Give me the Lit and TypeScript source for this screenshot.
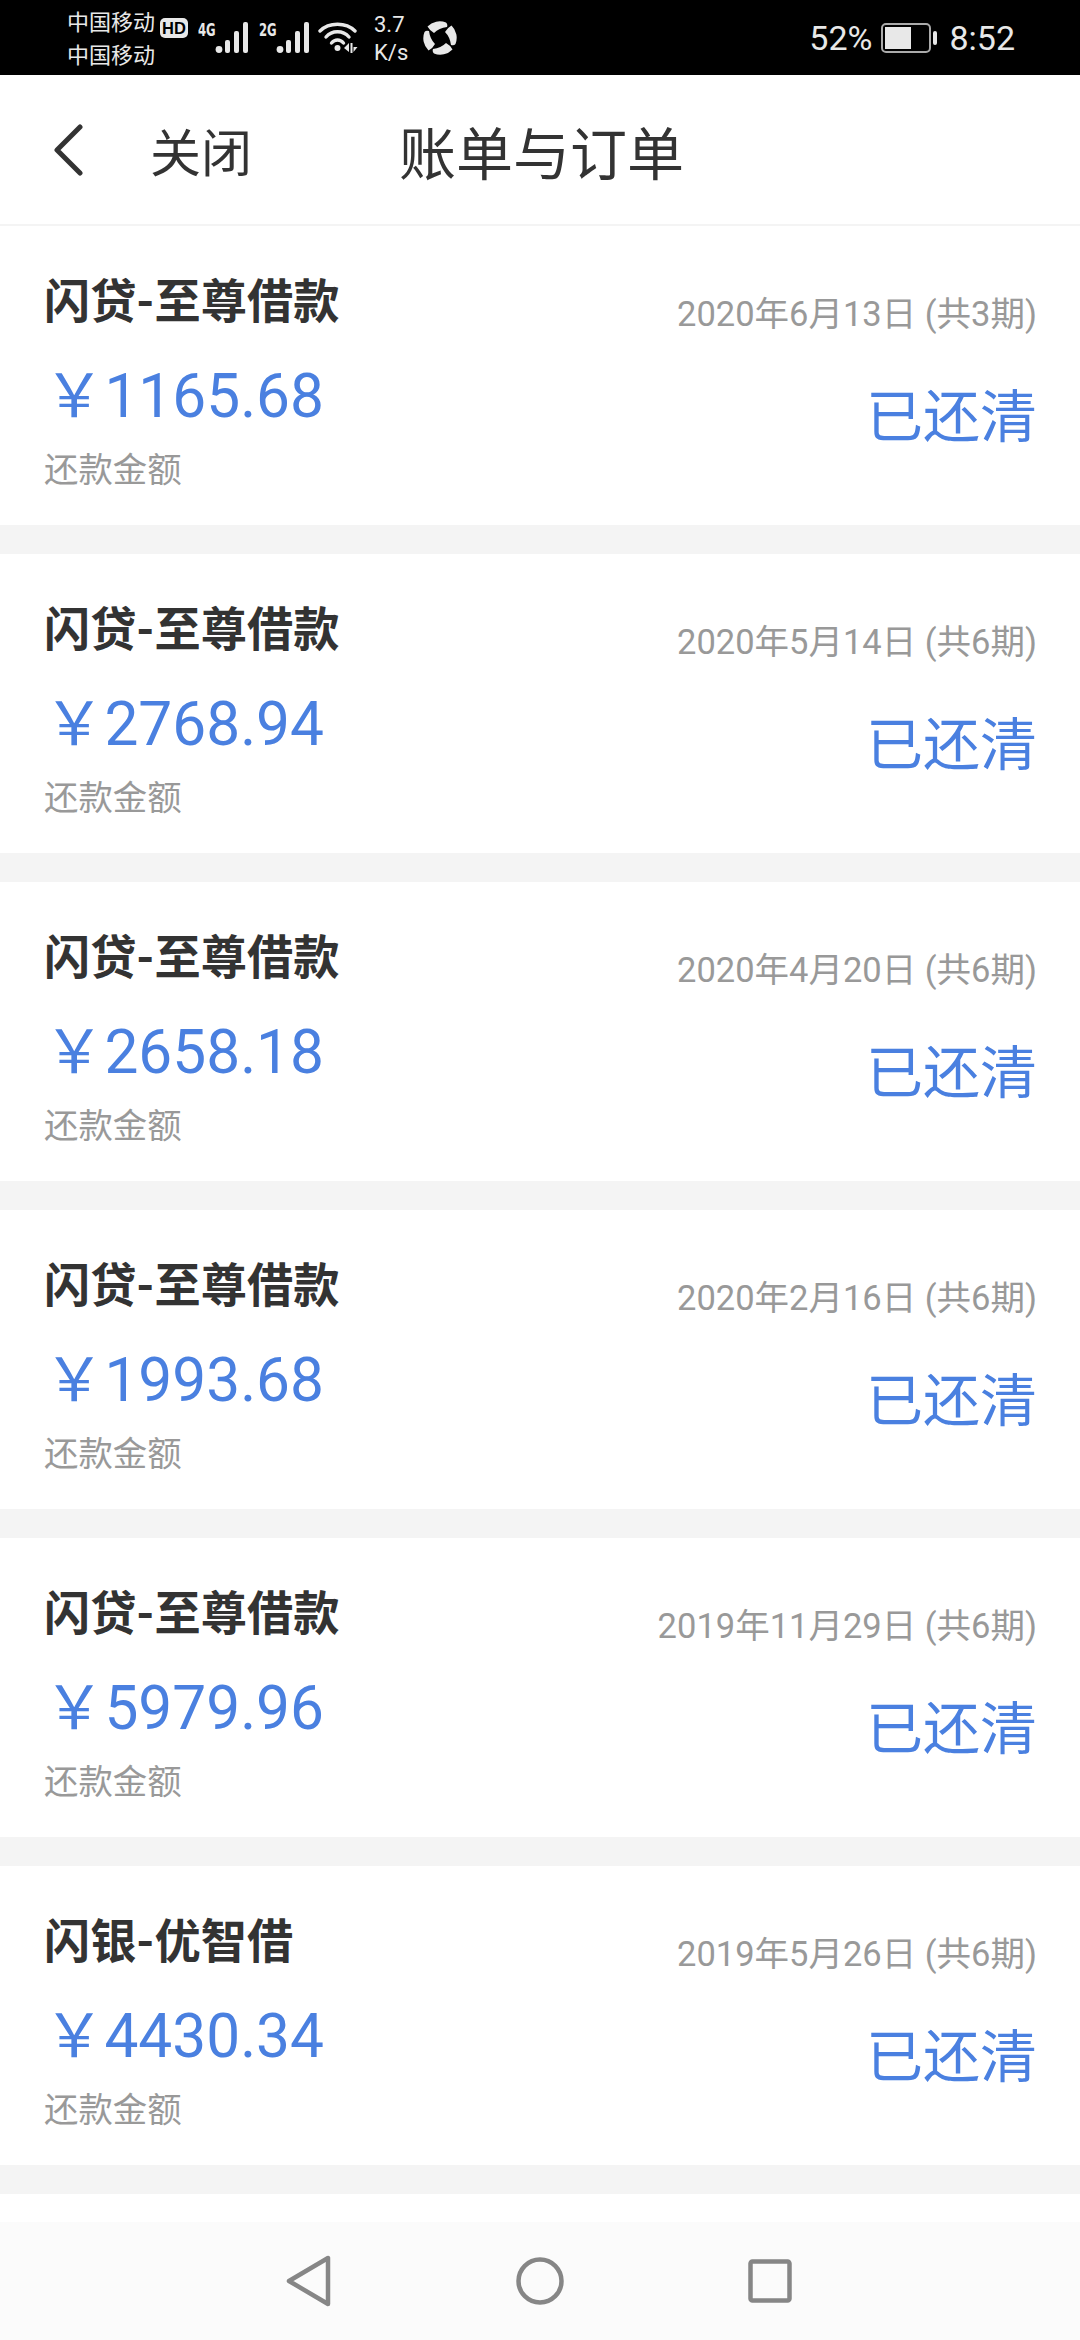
import { LitElement, html, css, svg } from 'lit';
import { customElement } from 'lit/decorators.js';

type Bill = { name: string, amount: string, date: string };

const BILLS: Bill[] = [
    { name: "闪贷-至尊借款", amount: "1165.68", date: "2020年6月13日 (共3期)" },
    { name: "闪贷-至尊借款", amount: "2768.94", date: "2020年5月14日 (共6期)" },
    { name: "闪贷-至尊借款", amount: "2658.18", date: "2020年4月20日 (共6期)" },
    { name: "闪贷-至尊借款", amount: "1993.68", date: "2020年2月16日 (共6期)" },
    { name: "闪贷-至尊借款", amount: "5979.96", date: "2019年11月29日 (共6期)" },
    { name: "闪银-优智借", amount: "4430.34", date: "2019年5月26日 (共6期)" },
];

const signal = html`
    <svg width="34" height="32" viewBox="0 0 34 32" fill="#e8e8e8">
        <circle cx="4" cy="27.5" r="3.4"></circle>
        <rect x="10" y="18" width="5" height="13" rx="2"></rect>
        <rect x="19" y="9" width="5" height="22" rx="2"></rect>
        <rect x="28" y="0" width="5" height="31" rx="2"></rect>
    </svg>`;

// one of the four petals of the round app logo
const PETAL = "M4.5 5.5 A17 17 0 0 1 23 1.5 Q25 3 24 6 Q16 7 11 12 Q7 10 4.5 5.5 Z";

@customElement('app-root')
export default class AppRoot extends LitElement {

    static styles = css`
    :host{
        display: flex;
        flex-direction: column;
        width: 1080px;
        height: 2340px;
        overflow: hidden;
        background: #fff;
        font-family: Roboto, "Noto Sans CJK SC", sans-serif;
    }

    .status{
        flex: none;
        display: flex;
        align-items: center;
        height: 75px;
        padding: 0 65px 0 67px;
        box-sizing: border-box;
        background: #000;
        color: #e8e8e8;
    }
    .carrier{
        width: 88px;
        margin-top: 2px;
        font-size: 22px;
        line-height: 33px;
        white-space: nowrap;
    }
    .hd{
        margin: 0 0 20px 5px;
    }
    .net{
        display: flex;
        align-items: flex-end;
        margin: 0 0 0 10px;
    }
    .net span{
        width: 17px;
        margin-bottom: 16px;
        font-family: "DejaVu Sans Condensed", sans-serif;
        font-size: 18px;
        font-weight: bold;
        line-height: 16px;
        transform: scaleX(.72);
        transform-origin: left center;
    }
    .wifi{
        margin-left: 8px;
    }
    .speed{
        width: 49px;
        margin: 2px 0 0 16px;
        font-size: 22px;
        line-height: 28px;
    }
    .logo{
        margin-top: 1px;
    }
    .spacer{
        flex: 1;
    }
    .status__text{
        font-size: 34px;
    }
    .battery{
        margin: 0 11px 0 9px;
    }

    .header{
        flex: none;
        display: flex;
        align-items: center;
        height: 151px;
        padding-left: 50px;
        box-sizing: border-box;
        border-bottom: 2px solid #f4f4f4;
        color: #333;
    }
    .close{
        width: 249px;
        margin-left: 64px;
        font-size: 51px;
    }
    .title{
        font-size: 57px;
    }

    .list{
        flex: 1;
        display: flex;
        flex-direction: column;
        gap: 29px;
    }
    .card{
        flex: none;
        display: flex;
        justify-content: space-between;
        height: 299px;
        padding: 0 43px 0 44px;
        box-sizing: border-box;
        box-shadow: 0 29px 0 #f4f4f4;
    }
    .card__name{
        margin-top: 44px;
        font-size: 46.2px;
        line-height: 64px;
        font-weight: bold;
        color: #333;
    }
    .card__amount{
        margin-top: 28px;
        font-size: 60.4px;
        line-height: 70px;
        color: #4a80e0;
    }
    .card__label{
        margin-top: 14px;
        font-size: 34.4px;
        line-height: 48px;
        color: #999;
    }
    .card__side{
        display: flex;
        flex-direction: column;
        align-items: flex-end;
    }
    .card__date{
        margin-top: 64px;
        font-size: 34.5px;
        line-height: 48px;
        color: #999;
    }
    .card__state{
        margin-top: 40px;
        font-size: 57px;
        line-height: 80px;
        color: #4a80e0;
    }

    .nav{
        flex: none;
        display: flex;
        align-items: center;
        height: 118px;
        padding-left: 286px;
        background: #fbfbfb;
    }
    .nav svg{
        display: block;
    }
    .nav svg + svg{
        margin-left: 184px;
    }
    `;

    render() {
        return html`
            <div class="status">
                <div class="carrier">
                    <div>中国移动</div>
                    <div>中国移动</div>
                </div>
                <svg class="hd" width="28" height="20" viewBox="0 0 28 20">
                    <rect width="28" height="20" rx="5" fill="#e8e8e8"></rect>
                    <text x="14" y="16" text-anchor="middle" font-family="Liberation Sans" font-weight="bold" font-size="16.5" fill="#000">HD</text>
                </svg>
                <div class="net"><span>4G</span>${signal}</div>
                <div class="net"><span>2G</span>${signal}</div>
                <svg class="wifi" width="40" height="36" viewBox="0 0 40 36" fill="none" stroke="#e8e8e8" stroke-width="3.4" stroke-linecap="round">
                    <path d="M2 11 C11 2 28 2 37 11"></path>
                    <path d="M8 17 C14 10 25 10 31 17"></path>
                    <path d="M13.5 23 C17 19 22 19 25.5 23"></path>
                    <circle cx="19.5" cy="28" r="3" fill="#e8e8e8" stroke="none"></circle>
                    <path d="M31 23 L26 28 L31 32 Z M32.5 23 H34.5 V33 H32.5 Z M35.5 27 H39.5 L35.5 32 Z" fill="#e8e8e8" stroke="none"></path>
                </svg>
                <div class="speed">3.7<br />K/s</div>
                <svg class="logo" width="34" height="34" viewBox="0 0 34 34" fill="#e8e8e8">
                    ${[0, 90, 180, 270].map(angle => svg`<path d="${PETAL}" transform="rotate(${angle} 17 17)"></path>`)}
                </svg>
                <div class="spacer"></div>
                <div class="status__text">52%</div>
                <svg class="battery" width="57" height="30" viewBox="0 0 57 30">
                    <rect x="1" y="1" width="48" height="28" rx="4" fill="none" stroke="#aaa" stroke-width="2"></rect>
                    <rect x="4" y="4" width="26" height="22" fill="#e8e8e8"></rect>
                    <rect x="52" y="8" width="4" height="14" rx="2" fill="#e8e8e8"></rect>
                </svg>
                <div class="status__text">8:52</div>
            </div>

            <div class="header">
                <svg width="36" height="52" viewBox="0 0 36 52" fill="none" stroke="#333" stroke-width="5" stroke-linecap="round" stroke-linejoin="round">
                    <path d="M30 3 L7 26 L30 49"></path>
                </svg>
                <div class="close">关闭</div>
                <div class="title">账单与订单</div>
            </div>

            <div class="list">
                ${BILLS.map(bill => html`
                    <div class="card">
                        <div>
                            <div class="card__name">${bill.name}</div>
                            <div class="card__amount">￥${bill.amount}</div>
                            <div class="card__label">还款金额</div>
                        </div>
                        <div class="card__side">
                            <div class="card__date">${bill.date}</div>
                            <div class="card__state">已还清</div>
                        </div>
                    </div>
                `)}
            </div>

            <div class="nav">
                <svg width="46" height="52" viewBox="0 0 46 52" fill="none" stroke="#868686" stroke-width="4.5" stroke-linejoin="round">
                    <path d="M3 26 L42 3 V49 Z"></path>
                </svg>
                <svg width="48" height="48" viewBox="0 0 48 48" fill="none" stroke="#868686" stroke-width="4.5">
                    <circle cx="24" cy="24" r="21.5"></circle>
                </svg>
                <svg width="44" height="44" viewBox="0 0 44 44" fill="none" stroke="#868686" stroke-width="4.5" stroke-linejoin="round">
                    <rect x="2.5" y="2.5" width="39" height="39" rx="2"></rect>
                </svg>
            </div>
        `;
    }
}
